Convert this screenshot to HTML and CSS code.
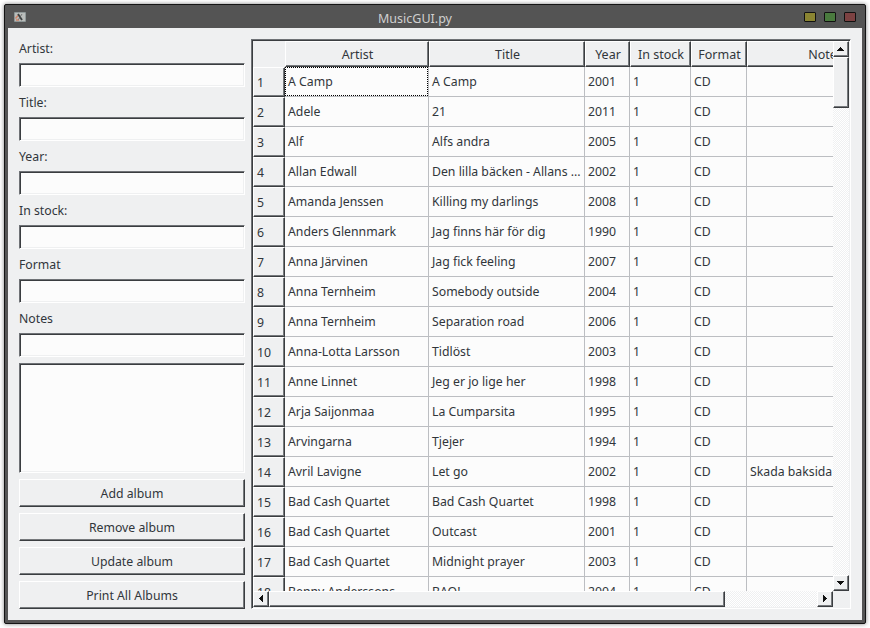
FILE: index.html
```
<!DOCTYPE html>
<html lang="en">
<head>
<meta charset="utf-8">
<title>MusicGUI.py</title>
<link rel="stylesheet" href="styles.css">
</head>
<body>
<div class="window">
  <header class="titlebar">
    <svg class="app-icon" width="12" height="10" viewBox="0 0 12 10"><rect width="12" height="10" rx="1" fill="#8f9898"/><rect x="1" y="1" width="10" height="8" fill="#b9bcba"/><path d="M1.500 6.500 4 3.500M2 8h3" stroke="#d08468" stroke-width="1.500"/><path d="M4 2l4 6" stroke="#3c4040" stroke-width="1.800"/><path d="M8 2 4.500 7.500" stroke="#5d6060" stroke-width=".8"/></svg>
    <h1>MusicGUI.py</h1>
    <div class="controls"><i class="min"></i><i class="max"></i><i class="close"></i></div>
  </header>
  <main class="content">
    <form class="form">
      <label for="artist">Artist:</label><input id="artist" class="sunken">
      <label for="title">Title:</label><input id="title" class="sunken">
      <label for="year">Year:</label><input id="year" class="sunken">
      <label for="stock">In stock:</label><input id="stock" class="sunken">
      <label for="format">Format</label><input id="format" class="sunken">
      <label for="notes">Notes</label><input id="notes" class="sunken">
      <textarea class="sunken"></textarea>
      <button type="button" class="raised">Add album</button>
      <button type="button" class="raised">Remove album</button>
      <button type="button" class="raised">Update album</button>
      <button type="button" class="raised">Print All Albums</button>
    </form>
    <section class="sunken list">
      <div class="viewport">
        <table>
          <colgroup><col class="c-num"><col class="c-artist"><col class="c-title"><col class="c-year"><col class="c-stock"><col class="c-format"><col class="c-notes"></colgroup>
          <thead><tr><td></td><th>Artist</th><th>Title</th><th>Year</th><th>In stock</th><th>Format</th><th>Notes</th></tr></thead>
          <tbody>
            <tr><th>1</th><td class="current">A Camp</td><td>A Camp</td><td>2001</td><td>1</td><td>CD</td><td></td></tr>
            <tr><th>2</th><td>Adele</td><td>21</td><td>2011</td><td>1</td><td>CD</td><td></td></tr>
            <tr><th>3</th><td>Alf</td><td>Alfs andra</td><td>2005</td><td>1</td><td>CD</td><td></td></tr>
            <tr><th>4</th><td>Allan Edwall</td><td>Den lilla bäcken - Allans ...</td><td>2002</td><td>1</td><td>CD</td><td></td></tr>
            <tr><th>5</th><td>Amanda Jenssen</td><td>Killing my darlings</td><td>2008</td><td>1</td><td>CD</td><td></td></tr>
            <tr><th>6</th><td>Anders Glennmark</td><td>Jag finns här för dig</td><td>1990</td><td>1</td><td>CD</td><td></td></tr>
            <tr><th>7</th><td>Anna Järvinen</td><td>Jag fick feeling</td><td>2007</td><td>1</td><td>CD</td><td></td></tr>
            <tr><th>8</th><td>Anna Ternheim</td><td>Somebody outside</td><td>2004</td><td>1</td><td>CD</td><td></td></tr>
            <tr><th>9</th><td>Anna Ternheim</td><td>Separation road</td><td>2006</td><td>1</td><td>CD</td><td></td></tr>
            <tr><th>10</th><td>Anna-Lotta Larsson</td><td>Tidlöst</td><td>2003</td><td>1</td><td>CD</td><td></td></tr>
            <tr><th>11</th><td>Anne Linnet</td><td>Jeg er jo lige her</td><td>1998</td><td>1</td><td>CD</td><td></td></tr>
            <tr><th>12</th><td>Arja Saijonmaa</td><td>La Cumparsita</td><td>1995</td><td>1</td><td>CD</td><td></td></tr>
            <tr><th>13</th><td>Arvingarna</td><td>Tjejer</td><td>1994</td><td>1</td><td>CD</td><td></td></tr>
            <tr><th>14</th><td>Avril Lavigne</td><td>Let go</td><td>2002</td><td>1</td><td>CD</td><td>Skada baksida</td></tr>
            <tr><th>15</th><td>Bad Cash Quartet</td><td>Bad Cash Quartet</td><td>1998</td><td>1</td><td>CD</td><td></td></tr>
            <tr><th>16</th><td>Bad Cash Quartet</td><td>Outcast</td><td>2001</td><td>1</td><td>CD</td><td></td></tr>
            <tr><th>17</th><td>Bad Cash Quartet</td><td>Midnight prayer</td><td>2003</td><td>1</td><td>CD</td><td></td></tr>
            <tr><th>18</th><td>Benny Anderssons</td><td>BAO!</td><td>2004</td><td>1</td><td>CD</td><td></td></tr>
          </tbody>
        </table>
      </div>
      <div class="scroll vertical">
        <span class="raised arrow"><svg width="8" height="4"><path d="M3 0h1v1h1v1h1v1h1v1H0V3h1V2h1V1h1z"/></svg></span>
        <span class="raised thumb"></span>
        <span class="raised arrow end"><svg width="8" height="4"><path d="M0 0h7v1H6v1H5v1H4v1H3V3H2V2H1V1H0z"/></svg></span>
      </div>
      <div class="scroll horizontal">
        <span class="raised arrow"><svg width="4" height="8"><path d="M4 0v7H3V6H2V5H1V4H0V3h1V2h1V1h1V0z"/></svg></span>
        <span class="raised thumb"></span>
        <span class="raised arrow end"><svg width="4" height="8"><path d="M0 0h1v1h1v1h1v1h1v1H3v1H2v1H1v1H0z"/></svg></span>
      </div>
    </section>
  </main>
</div>
</body>
</html>
```
FILE: styles.css
```
* { box-sizing: border-box; }
body {
  margin: 0;
  padding: 4px;
  height: 628px;
  overflow: hidden;
  background: #fff;
  color: #31363b;
  font: 12.27px/18px "Noto Sans", sans-serif;
}
.window {
  width: 862px;
  height: 620px;
  border: 1px solid #141414;
  border-radius: 2px;
  background: #545454;
  box-shadow: 0 0 4px rgba(0, 0, 0, .5);
  padding: 0 3px 3px;
}
.titlebar {
  height: 23px;
  display: grid;
  grid-template-columns: 70px 1fr 70px;
  align-items: center;
  padding: 0 6px;
}
.titlebar h1 {
  margin: 4px 0 0;
  text-align: center;
  font-size: 12.5px;
  font-weight: 400;
  line-height: 18px;
  color: #d0d0d0;
  padding-right: 40px;
}
.controls { display: flex; justify-content: flex-end; gap: 8px; }
.controls i { width: 12px; height: 10px; border: 1px solid #111; border-radius: 1px; }
.min { background: #8a8432; }
.max { background: #4a7a3e; }
.close { background: #7c4242; }

.content {
  height: 592px;
  background: #eff0f1;
  padding: 11px;
  display: flex;
  gap: 6px;
}
.form { width: 226px; display: flex; flex-direction: column; gap: 6px; }
.form label { height: 18px; line-height: 20px; }
.form input { height: 24px; flex: none; }
.form textarea { flex: 1; resize: none; min-height: 0; }
input, textarea, button { margin: 0; font: inherit; color: inherit; outline: 0; border-radius: 0; width: 100%; }
.form button { height: 28px; flex: none; padding: 2px 0 0; }

.sunken {
  border: 1px solid;
  border-color: #6f7276 #fff #fff #6f7276;
  padding: 1px;
  background: #fcfcfc;
  box-shadow: inset 1px 1px #3a3d40, inset -1px -1px #eff0f1;
}
.raised {
  border: 1px solid;
  border-color: #fff #3a3d40 #3a3d40 #fff;
  background: #eff0f1;
  box-shadow: inset -1px -1px #76797c;
}

.list {
  flex: none;
  width: 600px;
  display: grid;
  grid-template-columns: 580px 16px;
  grid-template-rows: 550px 16px;
  background: #eff0f1;
}
.viewport { overflow: hidden; background: #fcfcfc; }
table { width: 650px; table-layout: fixed; border-collapse: separate; border-spacing: 0; }
.c-num { width: 32px; }
.c-artist { width: 144px; }
.c-title { width: 156px; }
.c-year { width: 45px; }
.c-stock { width: 61px; }
.c-format { width: 56px; }
.c-notes { width: 156px; }
th {
  padding: 0;
  font-weight: 400;
  background: #eff0f1;
  border: 1px solid;
  border-color: #fff #3a3d40 #3a3d40 #fff;
  box-shadow: inset -1px -1px #76797c;
}
thead { background: #eff0f1; }
thead tr { height: 26px; }
thead th { padding: 2px 0 0 1px; font-size: 12.5px; }
tbody tr { height: 30px; }
tbody th { text-align: left; padding: 2px 0 0 3px; }
tbody td {
  padding: 0 0 0 3px;
  white-space: nowrap;
  border-right: 1px solid #bcbec2;
  border-bottom: 1px solid #bcbec2;
}
tbody .current { position: relative; }
.current::after { content: ""; position: absolute; inset: 0; border: 1px dotted #000; }

.scroll {
  display: flex;
  background: repeating-conic-gradient(#eff0f1 0 25%, #fff 0 50%) 0 0 / 2px 2px;
}
.vertical { flex-direction: column; }
.arrow { width: 16px; height: 16px; display: flex; align-items: center; justify-content: center; }
.arrow svg { fill: #111; }
.end { margin: auto 0 0; }
.horizontal .end { margin: 0 0 0 auto; }
.vertical .thumb { height: 51px; }
.horizontal .thumb { width: 456px; }
```
